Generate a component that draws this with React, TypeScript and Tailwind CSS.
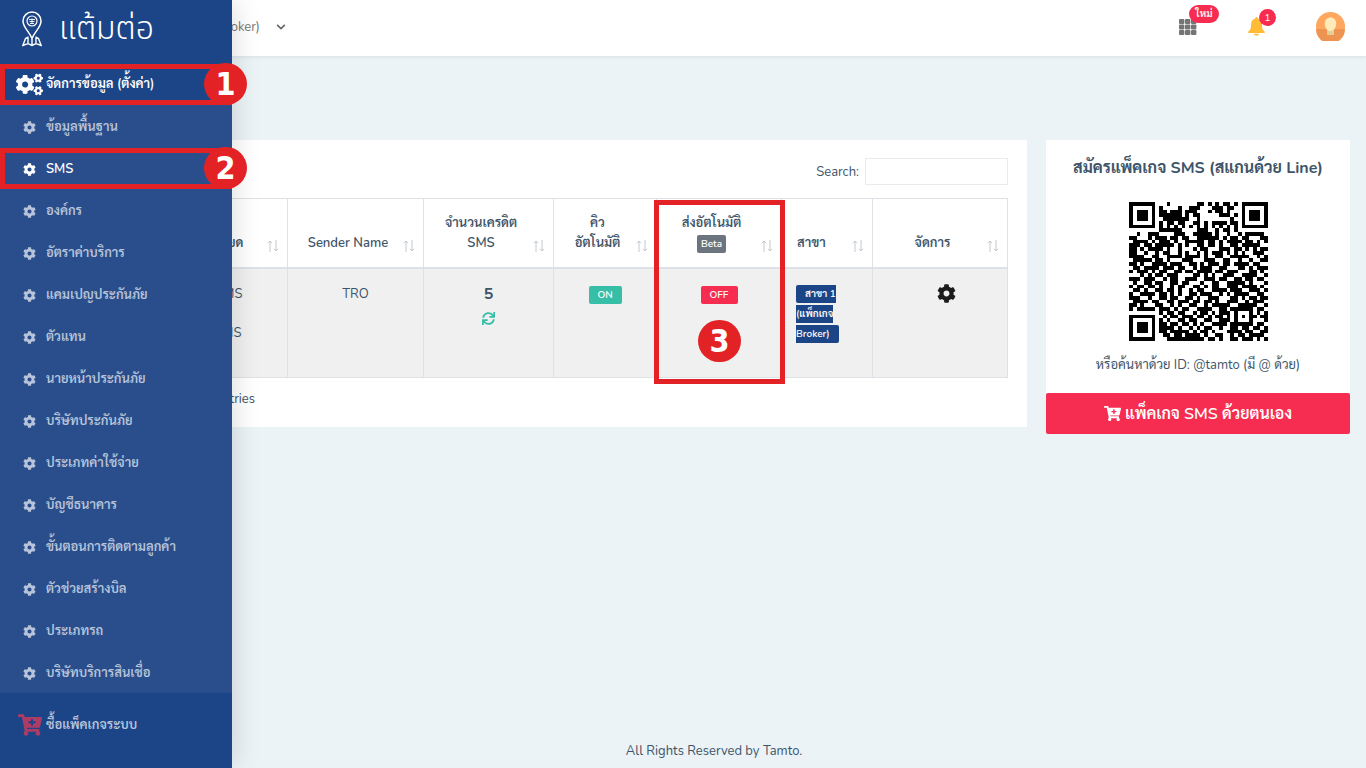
import type { ReactNode } from 'react';
import clsx from 'clsx';
import { FaCartPlus, FaChevronDown, FaCog, FaCogs, FaSync } from 'react-icons/fa';

const MENU = [
  'ข้อมูลพื้นฐาน',
  'SMS',
  'องค์กร',
  'อัตราค่าบริการ',
  'แคมเปญประกันภัย',
  'ตัวแทน',
  'นายหน้าประกันภัย',
  'บริษัทประกันภัย',
  'ประเภทค่าใช้จ่าย',
  'บัญชีธนาคาร',
  'ขั้นตอนการติดตามลูกค้า',
  'ตัวช่วยสร้างบิล',
  'ประเภทรถ',
  'บริษัทบริการสินเชื่อ',
];

const QR_ROWS = [
  '1111111000100000001101010110101111111',
  '1000001010000100111000111011001000001',
  '1011101011011101110001011010001011101',
  '1011101011111101011000001110101011101',
  '1011101001111111001000000001001011101',
  '1000001010110110011010111101101000001',
  '1111111010101010101010101010101111111',
  '0000000011111100001110010110100000000',
  '0010011100001110011111010010010111110',
  '1100010111011011001111110101101100011',
  '0111101011101001111101101011110110101',
  '1110110111110101001101101001101111100',
  '1101011110100100010110001110110101011',
  '1100100101100101001010111010101001110',
  '1111001100111101111010011001111100101',
  '0111110110100011100011100110010010011',
  '1101001111011100110101110110111101100',
  '0110111101110110010111001100011010111',
  '1011101011001101101111011011100011010',
  '0001010110111000011010100111001111001',
  '1110111001011001110011101100110110110',
  '0100110110011011000100110011111010001',
  '1011011010010110011010110011101111010',
  '0110100110110100101100111101110011101',
  '1001111011010100110111001010111100110',
  '1110010011011001101001110001101011011',
  '0111101100110111011011010011100101110',
  '1101000110010100110010111110011111001',
  '1011111011101011001111001101111110110',
  '0000000010110110010110101110100010101',
  '1111111001011011101101011010101011011',
  '1000001010100110110011001110100010001',
  '1011101011011011010100111101111110110',
  '1011101011110100101011001001101101101',
  '1011101011011111010110100011110110011',
  '1000001001101101111010011001011011110',
  '1111111000111111111101101001101110101',
];

function Step({ n, className }: { n: number; className?: string }) {
  return (
    <span
      className={clsx(
        'absolute z-10 flex h-[42px] w-[43px] items-center justify-center rounded-full bg-[#e32226] font-["DejaVu_Sans_Condensed","DejaVu_Sans",sans-serif] text-[32px] font-bold leading-none text-white',
        className,
      )}
    >
      {n}
    </span>
  );
}

function SortArrows() {
  return (
    <svg className="absolute bottom-[15px] right-2 h-3 w-3" viewBox="0 0 12 12" fill="none" stroke="#c3c9d0">
      <path d="M3 12V1M1 3.2 3 1l2 2.2M9 0v11M7 8.8 9 11l2-2.2" />
    </svg>
  );
}

function Th({ children, left }: { children?: ReactNode; left?: boolean }) {
  return (
    <th
      className={clsx(
        'relative border border-b-2 border-[#dee2e6] py-[14px] pl-[15px] pr-[30px] align-bottom font-semibold',
        left ? 'text-left' : 'text-center',
      )}
    >
      {children}
      <SortArrows />
    </th>
  );
}

function Td({ children, className }: { children?: ReactNode; className?: string }) {
  return <td className={clsx('border border-[#dee2e6] px-[14px] py-[15px] align-top', className)}>{children}</td>;
}

function Logo() {
  return (
    <svg className="h-9 w-5 shrink-0" viewBox="0 0 20 36" fill="none" stroke="#fff" strokeWidth="1.5">
      <path d="M10 27.500C7 20 1 16.500 1 10a9 9 0 0 1 18 0c0 6.500-6 10-9 17.500Z" />
      <circle cx="10" cy="10" r="5" strokeWidth="1.200" />
      <path d="M7 8.500h6M7.500 10.500h5M8 12.500h4M10 7.500v5" strokeWidth="0.900" />
      <path d="M6.500 26 3.500 27.500.8 34.500l5.200-2 4 2 4-2 5.200 2-2.700-7-3-1.500M10 28v6.500M6 27v5.500M14 27v5.500" strokeWidth="1.400" />
    </svg>
  );
}

function Sidebar() {
  return (
    <aside className="absolute inset-y-0 left-0 z-20 w-[232px] bg-[#1c4587] font-semibold text-[#b8c4da] shadow-[4px_0_24px_rgba(0,0,0,0.12)]">
      <a
        href="#home"
        className='flex h-[63px] items-center gap-[17px] pb-[6px] pl-[22px] font-["Noto_Sans_Thai",sans-serif] text-[32px] font-light text-white'
      >
        <Logo />
        <span>แต้มต่อ</span>
      </a>
      <nav>
        <div className="relative h-[42px]">
          <a href="#settings" className="flex h-full items-center gap-[3px] pl-4 text-white">
            <FaCogs size={27} />
            จัดการข้อมูล (ตั้งค่า)
          </a>
          <div className="pointer-events-none absolute inset-x-0 top-px h-[41px] border-[5px] border-[#e32226]" />
          <Step n={1} className="right-[-15px] top-0" />
        </div>
        <ul className="bg-[#294e8b]">
          {MENU.map((item) => (
            <li key={item} className="relative h-[42px]">
              <a
                href={`#${item}`}
                className={clsx('flex h-full items-center gap-[10px] pl-[23px] pt-[2px]', item === 'SMS' && 'text-white')}
              >
                <FaCog size={13} />
                {item}
              </a>
              {item === 'SMS' && (
                <>
                  <div className="pointer-events-none absolute inset-x-0 top-px h-[41px] border-[5px] border-[#e32226]" />
                  <Step n={2} className="right-[-15px] top-0" />
                </>
              )}
            </li>
          ))}
        </ul>
        <a href="#buy" className="flex h-16 items-center gap-1 pl-[18px]">
          <FaCartPlus size={24} color="#ac3c66" />
          ซื้อแพ็คเกจระบบ
        </a>
      </nav>
    </aside>
  );
}

function Header() {
  return (
    <header className="flex h-14 items-center justify-between bg-white pb-[3px] pl-[78px] pr-[21px] shadow-[0_1px_4px_rgba(0,0,0,0.08)]">
      <div className="relative">
        <select
          aria-label="สาขา"
          className="w-[212px] appearance-none bg-transparent pr-[30px] text-[#777] [text-align-last:right]"
        >
          <option>สาขา 1 (แพ็กเกจ Broker)</option>
        </select>
        <FaChevronDown size={10} className="pointer-events-none absolute right-1 top-[5px] text-[#666]" />
      </div>
      <div className="flex items-center gap-[51px]">
        <button type="button" aria-label="แอป" className="relative">
          <svg className="h-4 w-[18px]" viewBox="0 0 18 16" fill="#757575">
            {[0, 6, 12].map((x) =>
              [0, 5.5, 11].map((y) => <rect key={`${x}-${y}`} x={x} y={y} width="5.400" height="4.900" rx="1" />),
            )}
          </svg>
          <span className="absolute -top-[14px] left-[10px] flex h-[18px] w-[30px] items-center justify-center rounded-full bg-[#f62d51] text-[10px] font-semibold text-white">
            ใหม่
          </span>
        </button>
        <button type="button" aria-label="การแจ้งเตือน" className="relative">
          <svg className="h-[19px] w-[17px]" viewBox="0 0 17 19" fill="#ffbc34">
            <path d="M8.500 0c.8 0 1.200.6 1.200 1.400C12.700 2 14 4.500 14 7.500c0 4 .6 5.500 2.700 7V16H.3v-1.500C2.400 13 3 11.500 3 7.500c0-3 1.300-5.500 4.300-6.100C7.300.6 7.700 0 8.500 0ZM5.800 16.700h5.400c-.5 1.300-1.500 2-2.700 2s-2.200-.7-2.700-2Z" />
          </svg>
          <span className="absolute -top-2 left-[11px] flex h-[17px] w-[17px] items-center justify-center rounded-full bg-[#f62d51] text-[10px] text-white">
            1
          </span>
        </button>
        <button type="button" aria-label="บัญชีผู้ใช้">
          <svg className="h-[29px] w-[29px]" viewBox="0 0 29 29">
            <circle cx="14.500" cy="14.500" r="14.500" fill="#ffa75f" />
            <path d="M0 17h29a14.500 14.500 0 0 1-29 0Z" fill="#ee9350" />
            <path d="M11 18h7v5h-7z" fill="#e2cf95" />
            <path d="M14.500 5.500c3.500 0 5.700 2.700 5.700 6 0 4-2.200 7.500-5.700 7.500s-5.700-3.500-5.700-7.500c0-3.300 2.200-6 5.700-6Z" fill="#fdecb9" />
          </svg>
        </button>
      </div>
    </header>
  );
}

function SmsTable() {
  return (
    <section className="bg-white px-[19px] pb-[18px] pt-[18px]">
      <div className="flex items-center justify-end gap-[6px]">
        <label htmlFor="search">Search:</label>
        <input id="search" type="search" className="h-[27px] w-[143px] border border-[#e9ecef] px-2 outline-none" />
      </div>
      <table className="mt-[13px] w-full table-fixed border-collapse">
        <colgroup>
          <col className="w-[54px]" />
          <col className="w-[136px]" />
          <col className="w-[136px]" />
          <col className="w-[130px]" />
          <col className="w-[103px]" />
          <col className="w-[125px]" />
          <col className="w-[91px]" />
          <col />
        </colgroup>
        <thead>
          <tr>
            <Th />
            <Th>รายละเอียด</Th>
            <Th>
              <span className="whitespace-nowrap">Sender Name</span>
            </Th>
            <Th>
              จำนวนเครดิต
              <br />
              SMS
            </Th>
            <Th>
              คิว
              <br />
              <span className="whitespace-nowrap">อัตโนมัติ</span>
            </Th>
            <Th>
              ส่งอัตโนมัติ
              <br />
              <span className="inline-block h-[18px] rounded-xs bg-[#6c757d] px-1 text-[10px] leading-[18px] text-white">Beta</span>
            </Th>
            <Th left>สาขา</Th>
            <Th>จัดการ</Th>
          </tr>
        </thead>
        <tbody>
          <tr className="h-[109px] bg-[#f0f0f0] text-center">
            <Td />
            <Td>
              <p>ชื่อ SMS</p>
              <p className="mt-[19px]">ส่ง SMS</p>
            </Td>
            <Td>TRO</Td>
            <Td>
              <p className="text-base font-bold leading-5">5</p>
              <button type="button" aria-label="รีเฟรชเครดิต" className="mt-2 text-[#36bea6]">
                <FaSync size={13} />
              </button>
            </Td>
            <Td>
              <button type="button" className="mt-[2px] h-[18px] w-[33px] rounded-xs bg-[#36bea6] text-[10px] font-semibold leading-[18px] text-white">
                ON
              </button>
            </Td>
            <Td className="relative">
              <button type="button" className="mt-[2px] h-[18px] w-[37px] rounded-xs bg-[#f62d51] text-[10px] font-semibold leading-[18px] text-white">
                OFF
              </button>
              <div className="pointer-events-none absolute -bottom-[7px] -left-[3px] -right-1 -top-[69px] border-[5px] border-[#e32226]" />
              <Step n={3} className="left-[41px] top-[51px]" />
            </Td>
            <Td className="text-left text-[10px]">
              <span className="rounded-xs bg-[#1c4587] px-[9px] py-[2px] font-semibold text-white">
                สาขา 1
                <br />
                (แพ็กเกจ
                <br />
                Broker)
              </span>
            </Td>
            <Td>
              <button type="button" aria-label="ตั้งค่า" className="pl-3 text-[#1b1b1b]">
                <FaCog size={19} />
              </button>
            </Td>
          </tr>
        </tbody>
      </table>
      <p className="mt-[11px] w-[158px] whitespace-nowrap text-right">Showing 1 to 1 of 1 entries</p>
    </section>
  );
}

function LinePanel() {
  return (
    <aside className="text-center">
      <div className="flex flex-col items-center bg-white pb-[18px] pt-4">
        <h2 className="text-base font-bold leading-6">สมัครแพ็คเกจ SMS (สแกนด้วย Line)</h2>
        <svg className="mt-[22px] h-[139px] w-[139px]" viewBox="0 0 37 37" shapeRendering="crispEdges" role="img" aria-label="QR Line">
          {QR_ROWS.map((row, y) =>
            row.split('').map((bit, x) => (bit === '1' ? <rect key={`${x}-${y}`} x={x} y={y} width="1" height="1" /> : null)),
          )}
        </svg>
        <p className="mt-[14px]">หรือค้นหาด้วย ID: @tamto (มี @ ด้วย)</p>
      </div>
      <button type="button" className="flex h-[41px] w-full items-center justify-center gap-1 rounded-xs bg-[#f62d51] text-base font-semibold text-white">
        <FaCartPlus size={17} />
        แพ็คเกจ SMS ด้วยตนเอง
      </button>
    </aside>
  );
}

export default function App() {
  return (
    <div className='relative flex min-h-screen flex-col overflow-x-hidden bg-[#ebf3f7] font-["Nunito","Sarabun","Noto_Serif_Thai","Lato",sans-serif] text-[13px] leading-5 text-[#3e5569]'>
      <Header />
      <Sidebar />
      <main className="grid grid-cols-[1fr_304px] items-start gap-[19px] pb-10 pl-[78px] pr-4 pt-[84px]">
        <SmsTable />
        <LinePanel />
      </main>
      <footer className="mt-auto pb-[7px] pl-[62px] text-center">All Rights Reserved by Tamto.</footer>
    </div>
  );
}
